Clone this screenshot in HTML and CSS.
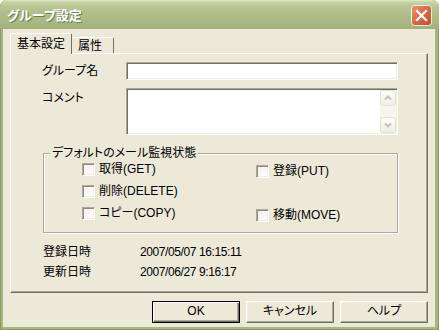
FILE: index.html
```html
<!DOCTYPE html>
<html lang="ja">
<head>
<meta charset="utf-8">
<title>グループ設定</title>
<link rel="stylesheet" href="styles.css">
</head>
<body>
<div class="window">
  <div class="titlebar">
    <span class="title">グループ設定</span>
    <span class="close">
      <svg width="21" height="21" viewBox="0 0 21 21">
        <defs>
          <linearGradient id="cg" x1="0" y1="0" x2="1" y2="1">
            <stop offset="0" stop-color="#ea9676"/>
            <stop offset="0.5" stop-color="#d86a43"/>
            <stop offset="1" stop-color="#c04c28"/>
          </linearGradient>
        </defs>
        <rect x="0.5" y="0.5" width="20" height="20" rx="3" fill="url(#cg)" stroke="#f4f4ee"/>
        <path d="M6 6 L15 15 M15 6 L6 15" stroke="#fff" stroke-width="2.2" stroke-linecap="square"/>
      </svg>
    </span>
  </div>
  <div class="client">
    <div class="tabs">
      <div class="tab active">基本設定</div>
      <div class="tab">属性</div>
    </div>
    <div class="panel">
      <div class="form">
        <span class="lbl">グループ名</span>
        <div class="field"></div>
        <span class="lbl lbl-top">コメント</span>
        <div class="field area">
          <div class="area-text"></div>
          <div class="scroll">
            <div class="sbtn"><svg width="14" height="14" viewBox="0 0 14 14"><polyline points="4,8.5 7,5.5 10,8.5" fill="none" stroke="#c4c1b1" stroke-width="1.8"/></svg></div>
            <div class="track"></div>
            <div class="sbtn"><svg width="14" height="14" viewBox="0 0 14 14"><polyline points="4,5.5 7,8.5 10,5.5" fill="none" stroke="#c4c1b1" stroke-width="1.8"/></svg></div>
          </div>
        </div>
      </div>
      <fieldset class="group">
        <legend>デフォルトのメール監視状態</legend>
        <div class="checks">
          <div class="chk"><span class="box"></span>取得(GET)</div>
          <div class="chk c2"><span class="box"></span>登録(PUT)</div>
          <div class="chk"><span class="box"></span>削除(DELETE)</div>
          <div></div>
          <div class="chk"><span class="box"></span>コピー(COPY)</div>
          <div class="chk c2"><span class="box"></span>移動(MOVE)</div>
        </div>
      </fieldset>
      <div class="dates">
        <span>登録日時</span><span class="date">2007/05/07 16:15:11</span>
        <span>更新日時</span><span class="date">2007/06/27 9:16:17</span>
      </div>
    </div>
    <div class="buttons">
      <button class="btn default">OK</button>
      <button class="btn">キャンセル</button>
      <button class="btn">ヘルプ</button>
    </div>
  </div>
</div>
</body>
</html>
```
FILE: styles.css
```css
html, body {
  margin: 0;
  padding: 0;
}
body {
  width: 439px;
  height: 330px;
  overflow: hidden;
  background: #ffffff;
  color: #000;
  font: 12px/14px "Liberation Sans", "Noto Sans CJK JP", sans-serif;
  font-feature-settings: "palt" 1;
}
.window {
  width: 439px;
  height: 330px;
  box-sizing: border-box;
  display: flex;
  flex-direction: column;
  background: #a6b67f;
  border-radius: 7px 7px 0 0;
  box-shadow: inset 1px 0 #8a9a66, inset -1px 0 #8a9a66, inset 0 -1px #8a9a66;
}
.titlebar {
  height: 29px;
  flex: none;
  display: flex;
  align-items: center;
  padding: 0 7px 0 7px;
  border-radius: 7px 7px 0 0;
  background: linear-gradient(180deg, #e2e9c8 0px, #c9d4a6 2px, #b9c795 6px, #afbd89 14px, #a9b882 22px, #a2b17a 29px);
}
.title {
  flex: 1;
  color: #fff;
  font-weight: bold;
  font-size: 13px;
  padding-top: 3px;
  text-shadow: 1px 1px 0 #6f7d4f;
}
.close {
  width: 21px;
  height: 21px;
  margin-top: 2px;
  display: block;
}
.close svg {
  display: block;
}
.client {
  flex: 1;
  margin: 0 4px 3px 3px;
  background: #ece9d8;
  padding: 4px 7px 0 7px;
  display: flex;
  flex-direction: column;
}
.tabs {
  height: 20px;
  display: flex;
  align-items: flex-end;
  position: relative;
  z-index: 1;
}
.tab {
  box-sizing: border-box;
  height: 16px;
  width: 42px;
  padding: 1px 0 0 6px;
  border: 1px solid;
  border-bottom: none;
  border-color: #fff #716f64 transparent #fff;
  border-radius: 2px 2px 0 0;
  background: #ece9d8;
}
.tab.active {
  height: 21px;
  width: 62px;
  margin-bottom: -1px;
  padding: 3px 0 0 6px;
}
.tab.active + .tab {
  border-left: none;
}
.panel {
  box-sizing: border-box;
  height: 240px;
  border: 1px solid;
  border-color: #fff #716f64 #716f64 #fff;
  box-shadow: inset -1px -1px #aca899;
  padding: 8px 0 0 31px;
}
.form {
  display: grid;
  grid-template-columns: 84px 272px;
  grid-template-rows: 18px 47px;
  row-gap: 8px;
  align-items: center;
}
.lbl-top {
  align-self: start;
  padding-top: 3px;
}
.field {
  box-sizing: border-box;
  height: 100%;
  background: #fff;
  border: 1px solid;
  border-color: #aca899 #fff #fff #aca899;
  box-shadow: inset 1px 1px #716f64, inset -1px -1px #f1efe2;
}
.area {
  display: flex;
  padding: 1px;
}
.area-text {
  flex: 1;
}
.scroll {
  width: 16px;
  display: flex;
  flex-direction: column;
}
.sbtn {
  box-sizing: border-box;
  height: 16px;
  border: 1px solid #e3e0d1;
  border-radius: 2px;
  background: linear-gradient(180deg, #fdfdfa, #efeee6);
}
.sbtn svg {
  display: block;
}
.track {
  flex: 1;
  background: #f6f5ef;
}
.group {
  box-sizing: border-box;
  width: 355px;
  margin: 11px 0 0 1px;
  padding: 0 0 8px 0;
  border: 1px solid #aca899;
  box-shadow: inset 1px 1px #fff, 1px 1px #fff;
  min-width: 0;
}
.group legend {
  padding: 0 2px;
  margin-left: 6px;
  line-height: 14px;
  background: #ece9d8;
}
.checks {
  display: grid;
  grid-template-columns: 174px auto;
  grid-auto-rows: 22px;
  padding-left: 38px;
  margin-top: -2px;
}
.chk {
  display: flex;
  align-items: center;
}
.chk.c2 {
  padding-top: 4px;
}
.box {
  box-sizing: border-box;
  width: 13px;
  height: 13px;
  margin-right: 4px;
  background: linear-gradient(135deg, #f0efe9, #ffffff);
  border: 1px solid;
  border-color: #aca899 #fff #fff #aca899;
  box-shadow: inset 1px 1px #8f8d80, inset -1px -1px #f1efe2;
}
.dates {
  margin: 9px 0 0 1px;
  display: grid;
  grid-template-columns: 97px auto;
  grid-auto-rows: 20px;
  align-items: center;
}
.date {
  letter-spacing: -0.4px;
}
.buttons {
  margin-top: 8px;
  display: flex;
  justify-content: flex-end;
  gap: 6px;
}
.btn {
  box-sizing: border-box;
  width: 88px;
  height: 22px;
  padding: 0 0 2px 0;
  font: inherit;
  color: #000;
  background: #ece9d8;
  border: 1px solid;
  border-color: #fff #716f64 #716f64 #fff;
  box-shadow: inset -1px -1px #aca899, inset 1px 1px #f1efe2;
}
.btn.default {
  border: 1px solid #000;
  box-shadow: inset 1px 1px #fff, inset -1px -1px #716f64, inset -2px -2px #aca899;
}
```
